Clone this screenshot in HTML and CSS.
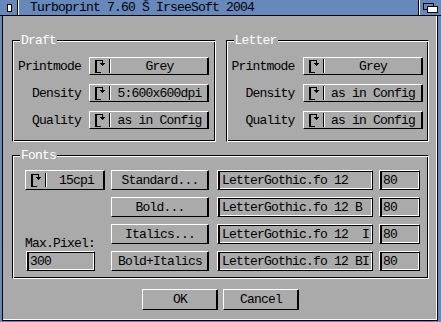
FILE: index.html
```html
<!DOCTYPE html>
<html>
<head>
<meta charset="utf-8">
<title>Turboprint</title>
<link rel="stylesheet" href="styles.css">
</head>
<body>
<div class="window">
  <div class="titlebar">
    <div class="close"><span class="close-box"></span></div>
    <div class="title">Turboprint 7.60 Š IrseeSoft 2004</div>
    <div class="depth">
      <svg width="22" height="15" viewBox="0 0 22 15" shape-rendering="crispEdges">
        <rect x="4.5" y="3.5" width="10" height="6" fill="#6688bb" stroke="#000"/>
        <rect x="8.5" y="6.5" width="10" height="6" fill="#fff" stroke="#000"/>
      </svg>
    </div>
  </div>
  <div class="body">
    <div class="top-groups">
      <div class="group">
        <span class="legend">Draft</span>
        <div class="form">
          <span class="lbl">Printmode</span>
          <div class="cycle"><svg class="ci" width="12" height="13" viewBox="0 0 12 13" shape-rendering="crispEdges"><path d="M1 0h8v1H3v11h4v1H1z" fill="#000"/><path d="M8 1h1v2H8z" fill="#000"/><path d="M6 3h5l-2.5 3z" fill="#000"/></svg><span class="sep"></span><span class="cv">Grey</span></div>
          <span class="lbl">Density</span>
          <div class="cycle"><svg class="ci" width="12" height="13" viewBox="0 0 12 13" shape-rendering="crispEdges"><path d="M1 0h8v1H3v11h4v1H1z" fill="#000"/><path d="M8 1h1v2H8z" fill="#000"/><path d="M6 3h5l-2.5 3z" fill="#000"/></svg><span class="sep"></span><span class="cv">5:600x600dpi</span></div>
          <span class="lbl">Quality</span>
          <div class="cycle"><svg class="ci" width="12" height="13" viewBox="0 0 12 13" shape-rendering="crispEdges"><path d="M1 0h8v1H3v11h4v1H1z" fill="#000"/><path d="M8 1h1v2H8z" fill="#000"/><path d="M6 3h5l-2.5 3z" fill="#000"/></svg><span class="sep"></span><span class="cv">as in Config</span></div>
        </div>
      </div>
      <div class="group">
        <span class="legend">Letter</span>
        <div class="form">
          <span class="lbl">Printmode</span>
          <div class="cycle"><svg class="ci" width="12" height="13" viewBox="0 0 12 13" shape-rendering="crispEdges"><path d="M1 0h8v1H3v11h4v1H1z" fill="#000"/><path d="M8 1h1v2H8z" fill="#000"/><path d="M6 3h5l-2.5 3z" fill="#000"/></svg><span class="sep"></span><span class="cv">Grey</span></div>
          <span class="lbl">Density</span>
          <div class="cycle"><svg class="ci" width="12" height="13" viewBox="0 0 12 13" shape-rendering="crispEdges"><path d="M1 0h8v1H3v11h4v1H1z" fill="#000"/><path d="M8 1h1v2H8z" fill="#000"/><path d="M6 3h5l-2.5 3z" fill="#000"/></svg><span class="sep"></span><span class="cv">as in Config</span></div>
          <span class="lbl">Quality</span>
          <div class="cycle"><svg class="ci" width="12" height="13" viewBox="0 0 12 13" shape-rendering="crispEdges"><path d="M1 0h8v1H3v11h4v1H1z" fill="#000"/><path d="M8 1h1v2H8z" fill="#000"/><path d="M6 3h5l-2.5 3z" fill="#000"/></svg><span class="sep"></span><span class="cv">as in Config</span></div>
        </div>
      </div>
    </div>
    <div class="group fonts">
      <span class="legend">Fonts</span>
      <div class="fgrid">
        <div class="cycle cpi"><svg class="ci" width="12" height="13" viewBox="0 0 12 13" shape-rendering="crispEdges"><path d="M1 0h8v1H3v11h4v1H1z" fill="#000"/><path d="M8 1h1v2H8z" fill="#000"/><path d="M6 3h5l-2.5 3z" fill="#000"/></svg><span class="sep"></span><span class="cv">15cpi</span></div>
        <div class="btn c2 r1">Standard...</div>
        <div class="str c3 r1">LetterGothic.fo 12</div>
        <div class="str num c4 r1">80</div>

        <div class="btn c2 r2">Bold...</div>
        <div class="str c3 r2">LetterGothic.fo 12 B</div>
        <div class="str num c4 r2">80</div>

        <span class="maxlbl">Max.Pixel:</span>
        <div class="btn c2 r3">Italics...</div>
        <div class="str c3 r3">LetterGothic.fo 12  I</div>
        <div class="str num c4 r3">80</div>

        <div class="str pix">300</div>
        <div class="btn c2 r4">Bold+Italics</div>
        <div class="str c3 r4">LetterGothic.fo 12 BI</div>
        <div class="str num c4 r4">80</div>
      </div>
    </div>
    <div class="actions">
      <div class="btn act">OK</div>
      <div class="btn act">Cancel</div>
    </div>
  </div>
</div>
</body>
</html>
```

FILE: styles.css
```css
* { box-sizing: border-box; }
html, body { margin: 0; padding: 0; }
body {
  width: 441px;
  height: 322px;
  overflow: hidden;
  background: #6688bb;
  font-family: "Liberation Mono", "Courier New", monospace;
  font-size: 13px;
  letter-spacing: -0.8px;
  color: #000;
}
.window {
  width: 441px;
  height: 322px;
  display: flex;
  flex-direction: column;
  background: #6688bb;
}
.titlebar {
  flex: none;
  height: 16px;
  display: flex;
  border-bottom: 1px solid #000;
}
.close {
  width: 18px;
  border-right: 1px solid #000;
  padding: 4px 0 0 7px;
}
.close-box {
  display: block;
  width: 5px;
  height: 8px;
  border: 1px solid #000;
  background: #fff;
}
.title {
  flex: 1;
  border-left: 1px solid #fff;
  padding-left: 11px;
  line-height: 16px;
  white-space: pre;
}
.depth {
  width: 23px;
  border-left: 1px solid #000;
  box-shadow: inset 1px 0 0 #fff;
}
.depth svg { display: block; }

.body {
  flex: 1;
  background: #aaaaaa;
  margin: 0 3px 1px 2px;
  border-left: 1px solid #000;
  border-right: 1px solid #000;
  border-bottom: 1px solid #000;
  box-shadow: inset -1px -1px 0 #fff;
  padding: 24px 8px 0 9px;
  display: flex;
  flex-direction: column;
}
.top-groups {
  display: flex;
  gap: 10px;
}
.group {
  flex: 1;
  position: relative;
  border: 1px solid;
  border-color: #000 #fff #fff #000;
  box-shadow: inset 1px 1px 0 #fff, inset -1px -1px 0 #000;
}
.legend {
  position: absolute;
  top: -7px;
  left: 7px;
  padding: 0 1px;
  background: #aaaaaa;
  color: #fff;
  line-height: 13px;
}
.form {
  display: grid;
  grid-template-columns: 64px 120px;
  grid-auto-rows: 18px;
  column-gap: 8px;
  row-gap: 9px;
  align-items: center;
  padding: 16px 0 12px 4px;
}
.lbl {
  text-align: right;
  line-height: 13px;
}
.cycle {
  height: 18px;
  display: flex;
  align-items: center;
  border: 1px solid;
  border-color: #fff #000 #000 #fff;
  box-shadow: inset -1px 0 0 #000;
  line-height: 13px;
}
.ci {
  display: block;
  margin-left: 4px;
  flex: none;
}
.sep {
  flex: none;
  width: 2px;
  height: 14px;
  margin-left: 3px;
  border-left: 1px solid #000;
  border-right: 1px solid #fff;
}
.cv {
  flex: 1;
  text-align: center;
  white-space: pre;
}
.btn {
  display: flex;
  align-items: center;
  justify-content: center;
  border: 1px solid;
  border-color: #fff #000 #000 #fff;
  box-shadow: inset -1px 0 0 #000;
  line-height: 13px;
  white-space: pre;
}
.str {
  display: flex;
  align-items: center;
  border: 1px solid;
  border-color: #fff #000 #000 #fff;
  box-shadow: inset 2px 1px 0 #000, inset -1px -1px 0 #fff;
  padding-left: 4px;
  line-height: 13px;
  white-space: pre;
}

.fonts {
  flex: none;
  margin-top: 13px;
}
.fgrid {
  display: grid;
  grid-template-columns: 80px 98px 158px 41px;
  grid-template-rows: repeat(4, 20px);
  column-gap: 6px;
  row-gap: 7px;
  padding: 14px 0 7px 12px;
}
.cpi { grid-column: 1; grid-row: 1; height: 20px; }
.cpi .cv { padding-left: 2px; }
.c2 { grid-column: 2; }
.c3 { grid-column: 3; margin-left: 2px; }
.c4 { grid-column: 4; }
.r1 { grid-row: 1; }
.r2 { grid-row: 2; }
.r3 { grid-row: 3; }
.r4 { grid-row: 4; }
.num { padding-left: 3px; }
.maxlbl {
  grid-column: 1;
  grid-row: 3;
  align-self: end;
  line-height: 13px;
  margin-bottom: -6px;
}
.pix {
  grid-column: 1;
  grid-row: 4;
  width: 69px;
  margin-left: 1px;
  padding-left: 3px;
}

.actions {
  display: flex;
  justify-content: center;
  gap: 5px;
  margin-top: 10px;
}
.act {
  width: 76px;
  height: 21px;
}
```
